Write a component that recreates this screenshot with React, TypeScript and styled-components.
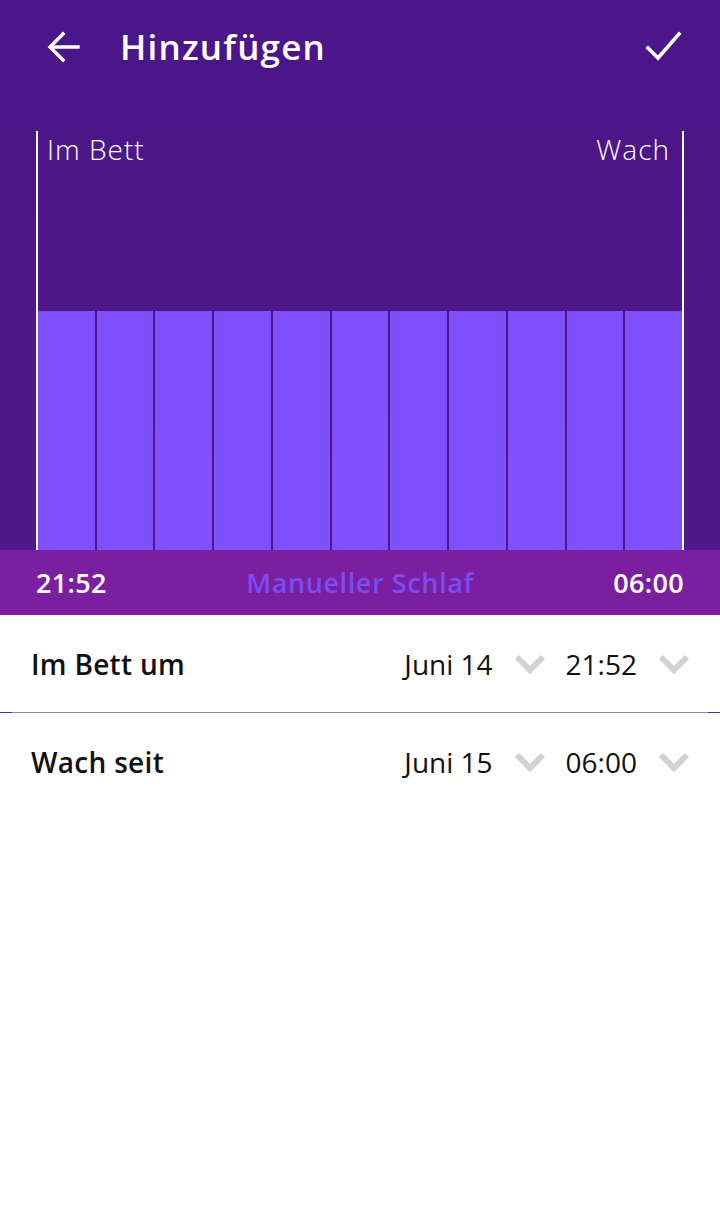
import { createGlobalStyle } from 'styled-components';
import styled from 'styled-components';

const GlobalStyle = createGlobalStyle`
  html, body {
    margin: 0;
    padding: 0;
    background: #ffffff;
  }
  body {
    font-family: 'Open Sans', 'Noto Sans', sans-serif;
    -webkit-font-smoothing: antialiased;
  }
`;

const BAR_COUNT = 11;

const rows = [
  { label: 'Im Bett um', date: 'Juni 14', time: '21:52' },
  { label: 'Wach seit', date: 'Juni 15', time: '06:00' },
];

function ArrowLeft() {
  return (
    <svg width="36" height="36" viewBox="0 0 36 36" fill="none">
      <path
        d="M32 18H5M17 5L4 18l13 13"
        stroke="#fff"
        strokeWidth="3.4"
        strokeLinecap="square"
      />
    </svg>
  );
}

function Check() {
  return (
    <svg width="40" height="36" viewBox="0 0 40 36" fill="none">
      <path
        d="M4 19l10 10L35 5"
        stroke="#fff"
        strokeWidth="3.6"
        strokeLinecap="square"
      />
    </svg>
  );
}

function Chevron() {
  return (
    <svg width="32" height="22" viewBox="0 0 32 22" fill="none">
      <path
        d="M3 4l13 13L29 4"
        stroke="#d2d2d2"
        strokeWidth="6"
        strokeLinejoin="miter"
      />
    </svg>
  );
}

export default function App() {
  return (
    <>
      <GlobalStyle />
      <Screen>
        <Top>
          <Toolbar>
            <IconButton>
              <ArrowLeft />
            </IconButton>
            <Title>Hinzufügen</Title>
            <CheckButton>
              <Check />
            </CheckButton>
          </Toolbar>
          <Chart>
            <Labels>
              <ChartLabel>Im Bett</ChartLabel>
              <ChartLabel>Wach</ChartLabel>
            </Labels>
            <Bars>
              {Array.from({ length: BAR_COUNT }).map((_, i) => (
                <Bar key={i} />
              ))}
            </Bars>
          </Chart>
        </Top>
        <Summary>
          <SummaryTime>21:52</SummaryTime>
          <SummaryType>Manueller Schlaf</SummaryType>
          <SummaryTime>06:00</SummaryTime>
        </Summary>
        {rows.map((row, i) => (
          <div key={row.label}>
            <Row>
              <RowLabel>{row.label}</RowLabel>
              <Picker>
                <PickerValue>{row.date}</PickerValue>
                <Chevron />
              </Picker>
              <Picker>
                <PickerValue>{row.time}</PickerValue>
                <Chevron />
              </Picker>
            </Row>
            {i === 0 && <Divider />}
          </div>
        ))}
      </Screen>
    </>
  );
}

const Screen = styled.div`
  width: 720px;
  min-height: 1228px;
  background: #fff;
`;

const Top = styled.div`
  background: linear-gradient(180deg, #4a1689 0%, #52178a 100%);
  height: 550px;
  display: flex;
  flex-direction: column;
`;

const Toolbar = styled.div`
  height: 96px;
  display: flex;
  align-items: center;
  padding: 0 36px 0 46px;
  box-sizing: border-box;
`;

const IconButton = styled.div`
  width: 36px;
  height: 36px;
  display: flex;
  margin-top: -2px;
`;

const CheckButton = styled(IconButton)`
  width: 40px;
  margin-left: auto;
`;

const Title = styled.h1`
  margin: -3px 0 0 38px;
  color: #fff;
  font-size: 35px;
  font-weight: 600;
  letter-spacing: 1.2px;
`;

const Chart = styled.div`
  flex: 1;
  margin: 35px 36px 0;
  border-left: 2px solid #fff;
  border-right: 2px solid #fff;
  display: flex;
  flex-direction: column;
`;

const Labels = styled.div`
  display: flex;
  justify-content: space-between;
  padding: 0 12px 0 9px;
  height: 180px;
  line-height: 36px;
`;

const ChartLabel = styled.span`
  color: #fff;
  font-size: 28px;
  font-weight: 300;
  letter-spacing: 1px;
`;

const Bars = styled.div`
  flex: 1;
  display: flex;
  gap: 2px;
`;

const Bar = styled.div`
  flex: 1;
  background: #7f4ffe;
`;

const Summary = styled.div`
  height: 65px;
  background: #7a1f9f;
  display: flex;
  align-items: center;
  justify-content: space-between;
  padding: 0 36px;
`;

const SummaryTime = styled.span`
  color: #fff;
  font-size: 27px;
  font-weight: 600;
  letter-spacing: 0.3px;
`;

const SummaryType = styled.span`
  color: #7c4cf3;
  font-size: 27px;
  font-weight: 600;
  letter-spacing: 0.6px;
`;

const Row = styled.div`
  height: 97px;
  display: flex;
  align-items: center;
  padding: 0 30px 0 31px;
`;

const RowLabel = styled.span`
  flex: 1;
  color: #111;
  font-size: 28px;
  font-weight: 600;
  letter-spacing: 0.3px;
`;

const Picker = styled.div`
  display: flex;
  align-items: center;
  gap: 21px;
  margin-left: 20px;
`;

const PickerValue = styled.span`
  color: #111;
  font-size: 28px;
  font-weight: 400;
  letter-spacing: 0;
`;

const Divider = styled.div`
  height: 1px;
  background: linear-gradient(
    90deg,
    #6a1bb3 0 12px,
    #8a8a8a 12px calc(100% - 12px),
    #6a1bb3 calc(100% - 12px)
  );
`;
